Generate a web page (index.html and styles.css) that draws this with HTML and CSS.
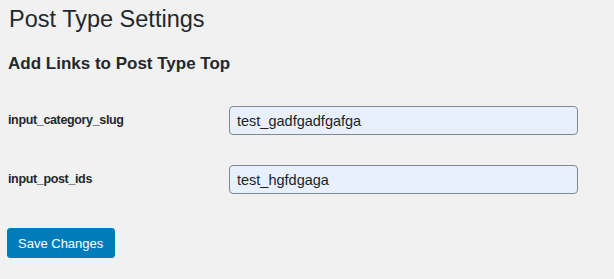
FILE: index.html
```html
<!DOCTYPE html>
<html lang="en">
  <head>
    <meta charset="UTF-8" />
    <meta name="viewport" content="width=device-width, initial-scale=1.0" />
    <title>Post Type Settings</title>
    <link rel="stylesheet" href="styles.css">
  </head>
  <body>
    <div class="wrap">
      <h1>Post Type Settings</h1>
      <h2>Add Links to Post Type Top</h2>

      <form class="form-table">
        <label for="input_category_slug">input_category_slug</label>
        <input type="text" id="input_category_slug" value="test_gadfgadfgafga" />

        <label for="input_post_ids">input_post_ids</label>
        <input type="text" id="input_post_ids" value="test_hgfdgaga" />
      </form>

      <button class="button-primary">Save Changes</button>
    </div>
  </body>
</html>
```

FILE: styles.css
```css
body {
  font-family: "Liberation Sans", Arial, sans-serif;
  margin: 0;
  background: #f1f1f1;
  color: #23282d;
}

.wrap {
  padding: 0 8px;
}

h1 {
  font-size: 23.5px;
  font-weight: 400;
  line-height: 29px;
  margin: 5px 0 0 1px;
}

h2 {
  font-size: 17px;
  font-weight: 700;
  line-height: 22px;
  margin: 19px 0 0;
}

.form-table {
  display: grid;
  grid-template-columns: 221px 349px;
  row-gap: 30px;
  align-items: center;
  margin-top: 31px;
}

label {
  font-size: 12.5px;
  font-weight: 700;
  letter-spacing: -0.35px;
  padding-bottom: 2px;
}

input[type="text"] {
  box-sizing: border-box;
  height: 29px;
  padding: 0 7px;
  border: 1px solid #7e8993;
  border-radius: 4px;
  background: #e8f0fe;
  font-family: inherit;
  font-size: 14.5px;
  color: #1e1e1e;
}

.button-primary {
  display: block;
  margin-top: 34px;
  margin-left: -1px;
  height: 30px;
  padding: 0 11px 0 10px;
  background: #007cba;
  border: 1px solid #007cba;
  border-radius: 3px;
  color: white;
  font-family: inherit;
  font-size: 13px;
}
```
